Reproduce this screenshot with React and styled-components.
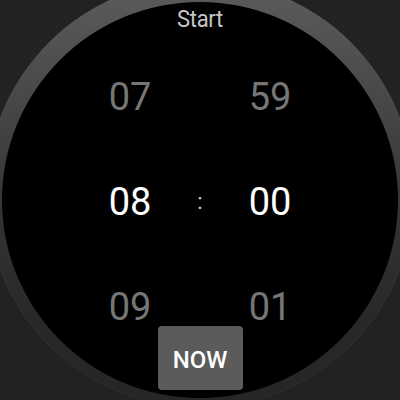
import React from 'react'
import styled, { createGlobalStyle } from 'styled-components'

const GlobalStyle = createGlobalStyle`
  html, body {
    margin: 0;
    padding: 0;
    background: #222222;
  }
  body {
    font-family: Roboto, "Noto Sans", sans-serif;
  }
`

const Screen = styled.div`
  width: 400px;
  height: 400px;
  overflow: hidden;
  background: #222222;
  display: flex;
  align-items: center;
  justify-content: center;
`

const Bezel = styled.div`
  flex-shrink: 0;
  width: 428px;
  height: 428px;
  margin-bottom: 12px;
  box-sizing: border-box;
  padding-top: 22px;
  border-radius: 50%;
  background: linear-gradient(180deg, #5c5c5c 0%, #4a4a4a 25%, #333333 55%, #282828 80%, #262626 100%);
  box-shadow: inset 0 0 0 1px rgba(255, 255, 255, 0.03);
  display: flex;
  justify-content: center;
  align-items: flex-start;
`

const Face = styled.div`
  width: 396px;
  height: 396px;
  border-radius: 50%;
  background: #000;
  display: flex;
  flex-direction: column;
  align-items: center;
`

const Title = styled.div`
  margin-top: 5px;
  font-size: 22px;
  line-height: 24px;
  letter-spacing: -0.3px;
  color: #c6c6c6;
  transform: scaleY(1.12);
`

const Picker = styled.div`
  margin-top: 46px;
  display: grid;
  grid-template-columns: 60px 80px 60px;
  grid-auto-rows: 40px;
  row-gap: 65px;
`

const Digit = styled.div`
  font-size: 38px;
  line-height: 40px;
  text-align: center;
  color: ${props => (props.active ? '#ffffff' : '#767676')};
`

const Colon = styled.div`
  font-size: 22px;
  line-height: 40px;
  text-align: center;
  color: #d0d0d0;
`

const NowButton = styled.button`
  margin-top: -1px;
  width: 85px;
  height: 64px;
  border: none;
  border-radius: 4px;
  background: #5b5b5b;
  color: #ffffff;
  font-family: Roboto, "Noto Sans", sans-serif;
  font-size: 24px;
  font-weight: 500;
  line-height: 64px;
  padding: 2px 0 0;
`

const rows = [
  { hour: '07', minute: '59', active: false },
  { hour: '08', minute: '00', active: true },
  { hour: '09', minute: '01', active: false },
]

export default function App() {
  return (
    <>
      <GlobalStyle />
      <Screen>
        <Bezel>
          <Face>
            <Title>Start</Title>
            <Picker>
              {rows.map(r => (
                <React.Fragment key={r.hour}>
                  <Digit active={r.active}>{r.hour}</Digit>
                  <Colon>{r.active ? ':' : ''}</Colon>
                  <Digit active={r.active}>{r.minute}</Digit>
                </React.Fragment>
              ))}
            </Picker>
            <NowButton>NOW</NowButton>
          </Face>
        </Bezel>
      </Screen>
    </>
  )
}
